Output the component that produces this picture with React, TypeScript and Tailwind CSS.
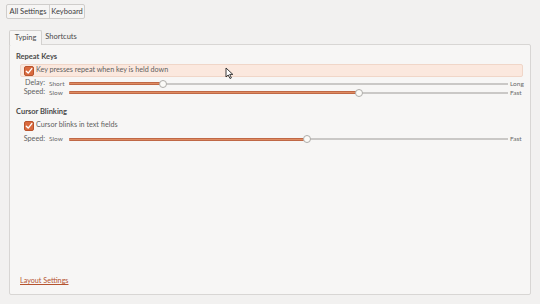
import React from "react";

function Check() {
  return (
    <span className="flex h-[10px] w-[10px] items-center justify-center rounded-[2px] border border-[#b9532c] bg-[#d9693d]">
      <svg width="8" height="8" viewBox="0 0 8 8">
        <path d="M1.3 4.2 L3.2 6.1 L6.8 1.6" stroke="#fff" strokeWidth="1.4" fill="none" strokeLinecap="round" strokeLinejoin="round" />
      </svg>
    </span>
  );
}

function Slider({ label, lo, hi, pos }: { label: string; lo: string; hi: string; pos: number }) {
  return (
    <div className="flex h-[9px] items-center">
      <span className="w-[29px] text-right text-[7.2px] text-[#5f5f5f]">{label}</span>
      <span className="ml-[4px] w-[20px] text-[6.5px] text-[#6a6a6a]">{lo}</span>
      <div className="relative flex h-[9px] flex-1 items-center">
        <div className="h-[2px] w-full bg-[#cac8c6]" />
        <div className="absolute left-0 top-[3px] h-[3px] rounded-[1px] bg-[linear-gradient(#b05638,#df8c62,#b05638)]" style={{ width: `${pos}%` }} />
        <div className="absolute top-[0.5px] h-[8px] w-[8px] -translate-x-1/2 rounded-full border border-[#aeaca9] bg-[#fbfaf7]" style={{ left: `${pos}%` }} />
      </div>
      <span className="ml-[2px] w-[13px] text-[6.5px] text-[#6a6a6a]">{hi}</span>
    </div>
  );
}

export default function App() {
  return (
    <div className="relative h-[304px] w-[540px] overflow-hidden bg-[#f2f1f0] text-[#3c3c3c]" style={{ fontFamily: 'Lato, "Open Sans", sans-serif' }}>
      <div className="pl-[6px] pt-[4px]">
        <div className="flex h-[15px] w-[79px] items-center rounded-[2px] border border-[#cfcdcb] bg-[#f6f5f4] text-[7.5px] text-[#3c3c3c]">
          <span className="flex h-full w-[43px] items-center justify-center border-r border-[#d4d2d0]">All Settings</span>
          <span className="flex h-full flex-1 items-center justify-center">Keyboard</span>
        </div>
      </div>
      <div className="ml-[9px] mt-[10px] flex h-[15px] items-end text-[7.5px]">
        <div className="relative z-10 -mb-px flex h-[15px] w-[33px] items-center justify-center rounded-t-[2px] border border-b-0 border-[#d3d1cf] bg-[#f7f6f5] text-[#4a4a4a]">Typing</div>
        <div className="flex h-[14px] w-[38px] items-center justify-center text-[#4a4a4a]">Shortcuts</div>
      </div>
      <div className="ml-[9px] flex h-[251px] w-[522px] flex-col rounded-[2px] border border-[#d8d6d4] bg-[#f7f6f5] pl-[6px] pr-[7px]">
        <div className="mt-[6px] text-[7.5px] font-bold text-[#4a4a4a]">Repeat Keys</div>
        <div className="ml-[4px] mt-[2px] flex h-[13px] items-center rounded-[2px] border border-[#f0d6c8] bg-[#fbe8de] pl-[3px]">
          <Check />
          <span className="ml-[2px] text-[7.2px] text-[#5f5f5f]">Key presses repeat when key is held down</span>
        </div>
        <div className="mt-[2px]">
          <Slider label="Delay:" lo="Short" hi="Long" pos={21.4} />
        </div>
        <Slider label="Speed:" lo="Slow" hi="Fast" pos={66.1} />
        <div className="mt-[9px] text-[7.5px] font-bold text-[#4a4a4a]">Cursor Blinking</div>
        <div className="ml-[8px] mt-[3px] flex h-[10px] items-center">
          <Check />
          <span className="ml-[2px] text-[7.2px] text-[#5f5f5f]">Cursor blinks in text fields</span>
        </div>
        <div className="mt-[4px]">
          <Slider label="Speed:" lo="Slow" hi="Fast" pos={54.3} />
        </div>
        <div className="flex-1" />
        <div className="mb-[7px] ml-[4px] text-[7.2px] text-[#b5532f] underline">Layout Settings</div>
      </div>
      <svg className="absolute left-[225px] top-[67px]" width="9" height="12" viewBox="0 0 9 12">
        <path d="M1 1 L1 10 L3.2 8 L5 11.5 L6.4 10.8 L4.7 7.4 L7.8 7.4 Z" fill="#fff" stroke="#222" strokeWidth="0.9" strokeLinejoin="round" />
      </svg>
    </div>
  );
}
